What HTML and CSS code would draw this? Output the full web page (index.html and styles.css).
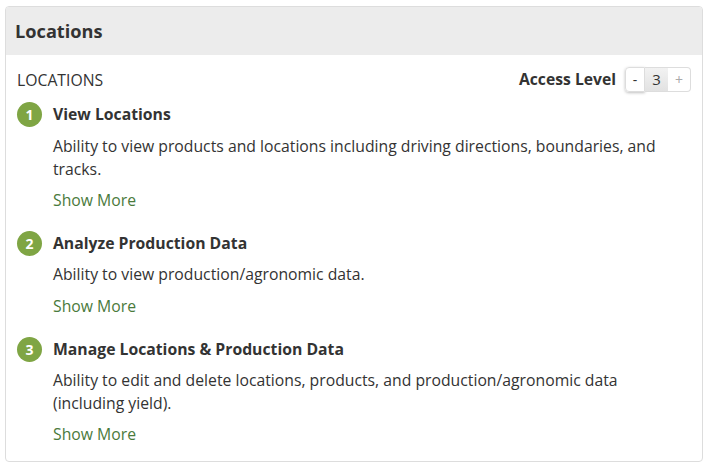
FILE: index.html
```html
<!DOCTYPE html>
<html lang="en">
<head>
<meta charset="utf-8">
<title>Locations</title>
<link rel="stylesheet" href="styles.css">
</head>
<body>
<section class="panel">
  <header class="panel-head"><h2>Locations</h2></header>
  <div class="panel-body">
    <div class="top-row">
      <span class="category">LOCATIONS</span>
      <div class="access">
        <span class="access-label">Access Level</span>
        <div class="stepper">
          <span class="step minus">-</span>
          <span class="step value">3</span>
          <span class="step plus">+</span>
        </div>
      </div>
    </div>
    <div class="item">
      <span class="badge">1</span>
      <div class="item-main">
        <h3>View Locations</h3>
        <p>Ability to view products and locations including driving directions, boundaries, and tracks.</p>
        <a class="more">Show More</a>
      </div>
    </div>
    <div class="item">
      <span class="badge">2</span>
      <div class="item-main">
        <h3>Analyze Production Data</h3>
        <p>Ability to view production/agronomic data.</p>
        <a class="more">Show More</a>
      </div>
    </div>
    <div class="item">
      <span class="badge">3</span>
      <div class="item-main">
        <h3>Manage Locations &amp; Production Data</h3>
        <p>Ability to edit and delete locations, products, and production/agronomic data (including yield).</p>
        <a class="more">Show More</a>
      </div>
    </div>
  </div>
</section>
</body>
</html>
```
FILE: styles.css
```css
* { box-sizing: border-box; }
html, body { margin: 0; padding: 0; background: #fff; }
body { padding: 6px 1px 0 5px; font-family: "Open Sans", sans-serif; font-size: 15.75px; color: #333; }
.panel { width: 698px; height: 456px; border: 1px solid #ddd; border-radius: 4px; overflow: hidden; }
.panel-head { height: 48px; background: #ececec; padding: 0 9px; display: flex; align-items: center; }
.panel-head h2 { margin: 0; font-size: 18.2px; font-weight: 700; color: #333; }
.panel-body { padding: 12px 11px 0 11px; }
.top-row { display: flex; justify-content: space-between; align-items: center; height: 26px; margin-bottom: 9.4px; }
.access { display: flex; align-items: center; gap: 9px; margin-bottom: 2px; }
.access-label { font-weight: 700; font-size: 15.7px; }
.stepper { display: flex; height: 25px; }
.step { display: flex; align-items: center; justify-content: center; font-size: 14px; border: 1px solid #ddd; }
.minus { width: 20px; border-radius: 4px 0 0 4px; box-shadow: 0 1px 3px rgba(0,0,0,.25); }
.value { width: 23px; font-size: 15px; background: linear-gradient(#f2f2f2, #e2e2e2); border-left: 0; border-right: 0; }
.plus { width: 23px; color: #aaa; border-left: 0; border-radius: 0 4px 4px 0; }
.item { display: flex; gap: 11px; margin-bottom: 19.4px; }
.badge { flex: none; width: 25px; height: 25px; border-radius: 50%; background: #7fa544; color: #fff; font-weight: 700; font-size: 14px; display: flex; align-items: center; justify-content: center; }
.item-main { flex: 1; padding-top: 1px; }
.item-main h3 { margin: 0 0 9.2px; font-size: 15.75px; font-weight: 700; line-height: 22px; }
.item-main p { margin: 0 0 8.2px; line-height: 23px; }
.more { display: block; color: #4a7a3c; line-height: 23px; }
```
